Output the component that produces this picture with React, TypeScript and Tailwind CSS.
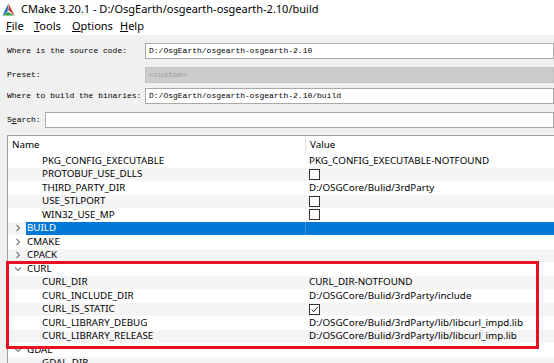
import React from 'react';

type Row = {
  name: string;
  value?: string;
  check?: 'on' | 'off';
  group?: 'open' | 'closed';
  selected?: boolean;
};

const before: Row[] = [
  { name: 'PKG_CONFIG_EXECUTABLE', value: 'PKG_CONFIG_EXECUTABLE-NOTFOUND' },
  { name: 'PROTOBUF_USE_DLLS', check: 'off' },
  { name: 'THIRD_PARTY_DIR', value: 'D:/OSGCore/Bulid/3rdParty' },
  { name: 'USE_STLPORT', check: 'off' },
  { name: 'WIN32_USE_MP', check: 'off' },
  { name: 'BUILD', group: 'closed', selected: true },
  { name: 'CMAKE', group: 'closed' },
  { name: 'CPACK', group: 'closed' },
];

const curl: Row[] = [
  { name: 'CURL', group: 'open' },
  { name: 'CURL_DIR', value: 'CURL_DIR-NOTFOUND' },
  { name: 'CURL_INCLUDE_DIR', value: 'D:/OSGCore/Bulid/3rdParty/include' },
  { name: 'CURL_IS_STATIC', check: 'on' },
  { name: 'CURL_LIBRARY_DEBUG', value: 'D:/OSGCore/Bulid/3rdParty/lib/libcurl_impd.lib' },
  { name: 'CURL_LIBRARY_RELEASE', value: 'D:/OSGCore/Bulid/3rdParty/lib/libcurl_imp.lib' },
];

const after: Row[] = [
  { name: 'GDAL', group: 'open' },
  { name: 'GDAL_DIR', value: '' },
];

const ui = { fontFamily: '"Noto Sans", "Open Sans", sans-serif' };
const song = { fontFamily: '"Liberation Mono", "Noto Sans CJK SC", monospace' };

function CMakeLogo() {
  return (
    <svg width="13" height="13" viewBox="0 0 26 26">
      <polygon points="13,1 1,25 11,17" fill="#1565c0" />
      <polygon points="13,1 25,25 14,15" fill="#d32f2f" />
      <polygon points="1,25 25,25 12,18" fill="#2e9e3e" />
      <polygon points="13,4 11,17 14,15" fill="#9e9e9e" />
    </svg>
  );
}

function Chevron({ open }: { open: boolean }) {
  return (
    <svg width="8" height="8" viewBox="0 0 8 8" className="text-[#7a7a7a]">
      {open ? (
        <path d="M1 2.5 L4 5.5 L7 2.5" fill="none" stroke="currentColor" strokeWidth="1.1" />
      ) : (
        <path d="M2.5 1 L5.5 4 L2.5 7" fill="none" stroke="currentColor" strokeWidth="1.1" />
      )}
    </svg>
  );
}

function Box({ on }: { on: boolean }) {
  return (
    <span className="flex h-[11px] w-[11px] items-center justify-center border border-[#333333] bg-white">
      {on && (
        <svg width="9" height="9" viewBox="0 0 9 9">
          <path d="M1.5 4.5 L3.6 6.8 L7.8 1.8" fill="none" stroke="#333333" strokeWidth="1" />
        </svg>
      )}
    </span>
  );
}

function TreeRow({ row, index }: { row: Row; index: number }) {
  const stripe = index % 2 === 1 ? 'bg-[#f5f5f5]' : 'bg-white';
  return (
    <div className={`flex h-[13.5px] items-center text-[9.8px] leading-none ${stripe}`}>
      <div className="flex h-full w-[297px] items-center">
        {row.group ? (
          <>
            <span className="flex w-[18px] justify-center pl-[2px]">
              <Chevron open={row.group === 'open'} />
            </span>
            <span className={`flex h-full flex-1 items-center pl-[1px] ${row.selected ? 'bg-[#0078d7] text-white' : 'text-black'}`}>
              {row.name}
            </span>
          </>
        ) : (
          <span className="pl-[34px] text-black">{row.name}</span>
        )}
      </div>
      <div className={`flex h-full flex-1 items-center pl-[4px] text-black ${row.selected ? 'border-l border-[#3d8fd6] bg-[#0078d7]' : ''}`}>
        {row.check ? <Box on={row.check === 'on'} /> : row.value}
      </div>
    </div>
  );
}

function Field({ label, value, labelWidth, disabled }: { label: React.ReactNode; value: string; labelWidth: string; disabled?: boolean }) {
  return (
    <div className="flex h-[16px] items-center">
      <span className={`shrink-0 pl-[7px] text-[8px] text-black ${labelWidth}`} style={song}>
        {label}
      </span>
      <div
        className={`flex h-full flex-1 items-center border pl-[3px] text-[8px] ${
          disabled ? 'border-[#c4c4c4] bg-[#cccccc] text-[#999999]' : 'border-[#a9a9a9] bg-white text-black'
        }`}
        style={song}
      >
        {value}
      </div>
    </div>
  );
}

export default function App() {
  return (
    <div className="relative h-[363px] w-[554px] overflow-hidden bg-[#f0f0f0]" style={ui}>
      {/* title bar */}
      <div className="flex h-[18px] items-center gap-[6px] bg-white pl-[2px] text-[11px] text-black">
        <CMakeLogo />
        <span>CMake 3.20.1 - D:/OsgEarth/osgearth-osgearth-2.10/build</span>
      </div>

      {/* menu */}
      <div className="flex h-[17px] items-center bg-white pl-[6px] text-[11px] text-black">
        <span className="w-[28px]"><u>F</u>ile</span>
        <span className="w-[38px]"><u>T</u>ools</span>
        <span className="w-[48px]"><u>O</u>ptions</span>
        <span><u>H</u>elp</span>
      </div>

      {/* paths */}
      <div className="mt-[8px]">
        <Field label="Where is the source code:" value="D:/OsgEarth/osgearth-osgearth-2.10" labelWidth="w-[145px]" />
      </div>
      <div className="mt-[8px]">
        <Field label="Preset:" value="<custom>" labelWidth="w-[145px]" disabled />
      </div>
      <div className="mt-[5px]">
        <Field label="Where to build the binaries:" value="D:/OsgEarth/osgearth-osgearth-2.10/build" labelWidth="w-[145px]" />
      </div>
      <div className="mt-[8px]">
        <Field label={<>S<u>e</u>arch:</>} value="" labelWidth="w-[45px]" />
      </div>

      {/* cache tree */}
      <div className="ml-[7px] mt-[7px] h-[300px] border-l border-t border-[#a0a0a0] bg-white">
        <div className="flex h-[18px] items-center text-[9.8px] text-black">
          <div className="flex h-full w-[297px] items-center pl-[4px]">Name</div>
          <div className="flex h-full flex-1 items-center border-l border-[#e0e0e0] pl-[4px]">Value</div>
        </div>
        {before.map((r, i) => (
          <TreeRow key={r.name} row={r} index={i} />
        ))}
        <div className="relative">
          {curl.map((r, i) => (
            <TreeRow key={r.name} row={r} index={before.length + i} />
          ))}
          <div className="pointer-events-none absolute left-[-2px] top-[-1px] bottom-[-6px] w-[533px] border-[3px] border-[#e81123]" />
        </div>
        {after.map((r, i) => (
          <TreeRow key={r.name} row={r} index={before.length + curl.length + i} />
        ))}
      </div>
    </div>
  );
}
